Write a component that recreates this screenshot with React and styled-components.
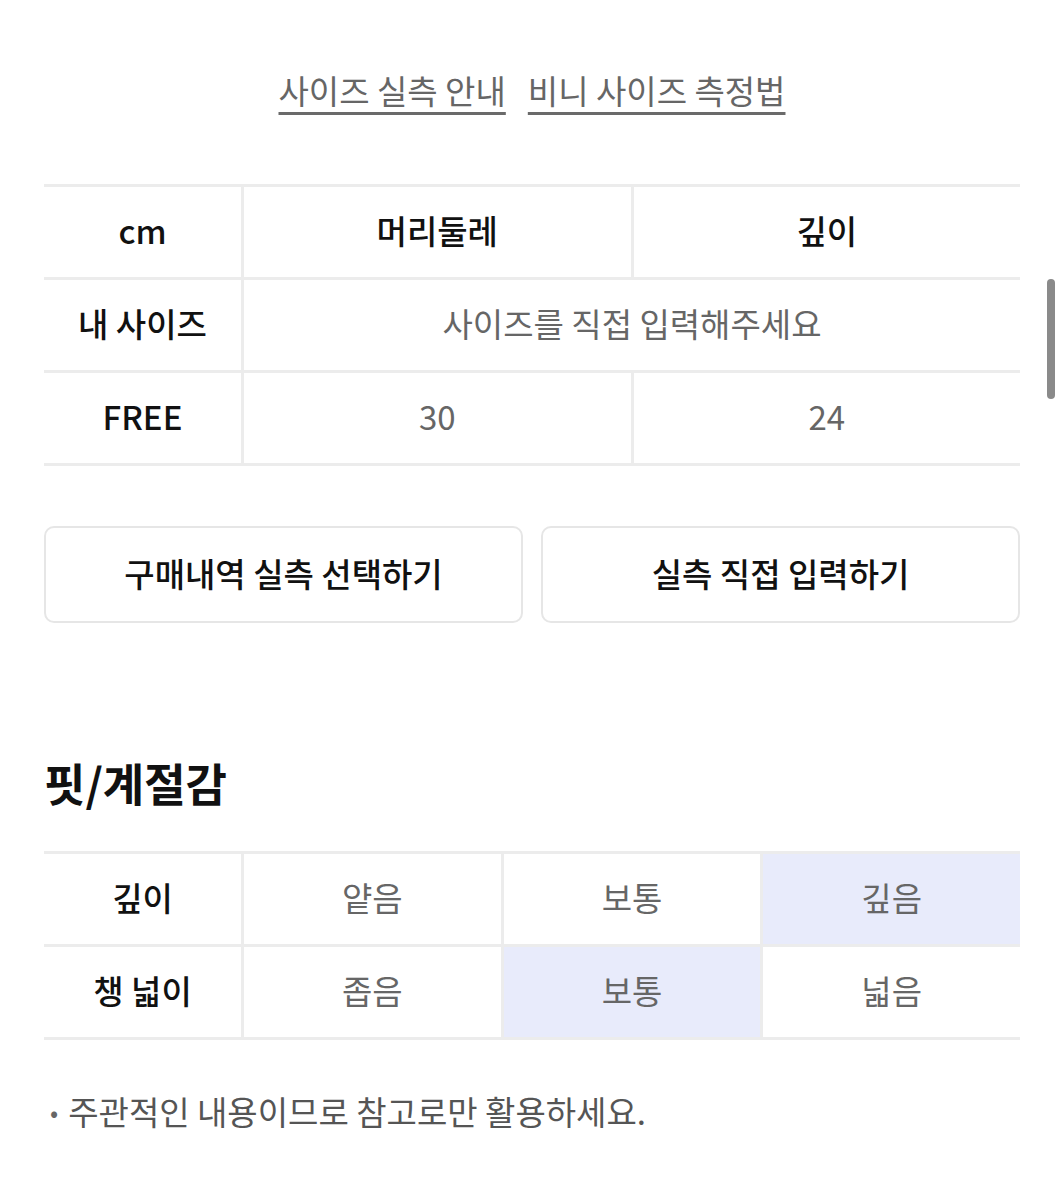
import styled, { createGlobalStyle } from "styled-components";

const GlobalStyle = createGlobalStyle`
  html, body {
    margin: 0;
    padding: 0;
    background: #fff;
  }
  body {
    font-family: "Noto Sans CJK KR", "Noto Sans", sans-serif;
    color: #111;
  }
`;

const sizeRows = [
  { label: "내 사이즈", values: ["사이즈를 직접 입력해주세요"], span: true },
  { label: "FREE", values: ["30", "24"] },
];

const fitRows = [
  { label: "깊이", options: ["얕음", "보통", "깊음"], picked: 2 },
  { label: "챙 넓이", options: ["좁음", "보통", "넓음"], picked: 1 },
];

const App = () => {
  return (
    <>
      <GlobalStyle />
      <Page>
        <Links>
          <LinkText>사이즈 실측 안내</LinkText>
          <LinkText>비니 사이즈 측정법</LinkText>
        </Links>

        <Table>
          <Row>
            <Head>cm</Head>
            <Head>머리둘레</Head>
            <Head>깊이</Head>
          </Row>
          {sizeRows.map((row) => (
            <Row key={row.label}>
              <Head>{row.label}</Head>
              {row.values.map((v, i) => (
                <Value key={i} $span={row.span}>
                  {v}
                </Value>
              ))}
            </Row>
          ))}
        </Table>

        <Buttons>
          <Button>구매내역 실측 선택하기</Button>
          <Button>실측 직접 입력하기</Button>
        </Buttons>

        <Title>핏/계절감</Title>

        <FitTable>
          {fitRows.map((row) => (
            <FitRow key={row.label}>
              <Head>{row.label}</Head>
              {row.options.map((o, i) => (
                <Value key={i} $active={i === row.picked}>
                  {o}
                </Value>
              ))}
            </FitRow>
          ))}
        </FitTable>

        <Note>
          <Dot>•</Dot>주관적인 내용이므로 참고로만 활용하세요.
        </Note>
      </Page>
      <Scrollbar />
    </>
  );
};

export default App;

const Page = styled.div`
  width: 1064px;
  min-height: 1200px;
  box-sizing: border-box;
  padding: 68px 44px 0;
`;

const Links = styled.div`
  display: flex;
  justify-content: center;
  gap: 22px;
  margin-bottom: 72px;
`;

const LinkText = styled.span`
  font-size: 33px;
  color: #666;
  line-height: 44px;
  text-decoration: underline;
  text-decoration-thickness: 3px;
  text-underline-offset: 8px;
  text-decoration-color: #6a6a6a;
`;

const Table = styled.div`
  border-top: 3px solid #ececec;
`;

const Row = styled.div`
  display: grid;
  grid-template-columns: 197px 1fr 1fr;
  height: 90px;
  border-bottom: 3px solid #ececec;
`;

const Head = styled.div`
  display: flex;
  align-items: center;
  justify-content: center;
  padding-bottom: 4px;
  font-size: 33px;
  font-weight: 500;
  color: #111;
  & + & {
    border-left: 3px solid #ececec;
  }
`;

const Value = styled.div`
  display: flex;
  align-items: center;
  justify-content: center;
  padding-bottom: 4px;
  font-size: 33px;
  color: #666;
  border-left: 3px solid #ececec;
  grid-column: ${(p) => (p.$span ? "2 / 4" : "auto")};
  background: ${(p) => (p.$active ? "#e8ebfb" : "#fff")};
`;

const Buttons = styled.div`
  display: grid;
  grid-template-columns: 1fr 1fr;
  gap: 18px;
  margin-top: 60px;
`;

const Button = styled.button`
  height: 97px;
  border: 2px solid #e6e6e6;
  border-radius: 10px;
  background: #fff;
  padding-bottom: 4px;
  font-family: inherit;
  font-size: 33px;
  font-weight: 500;
  color: #111;
`;

const Title = styled.h2`
  margin: 132px 0 40px;
  font-size: 45px;
  font-weight: 700;
  line-height: 56px;
  color: #111;
`;

const FitTable = styled.div`
  border-top: 3px solid #ececec;
`;

const FitRow = styled.div`
  display: grid;
  grid-template-columns: 197px repeat(3, 1fr);
  height: 90px;
  border-bottom: 3px solid #ececec;
`;

const Note = styled.p`
  margin: 47px 0 0;
  font-size: 33px;
  color: #555;
  display: flex;
  align-items: center;
`;

const Dot = styled.span`
  font-size: 24px;
  margin: 0 10px 0 6px;
  color: #666;
`;

const Scrollbar = styled.div`
  position: fixed;
  top: 279px;
  left: 1047px;
  width: 8px;
  height: 120px;
  border-radius: 4px;
  background: #8a8a8a;
`;
